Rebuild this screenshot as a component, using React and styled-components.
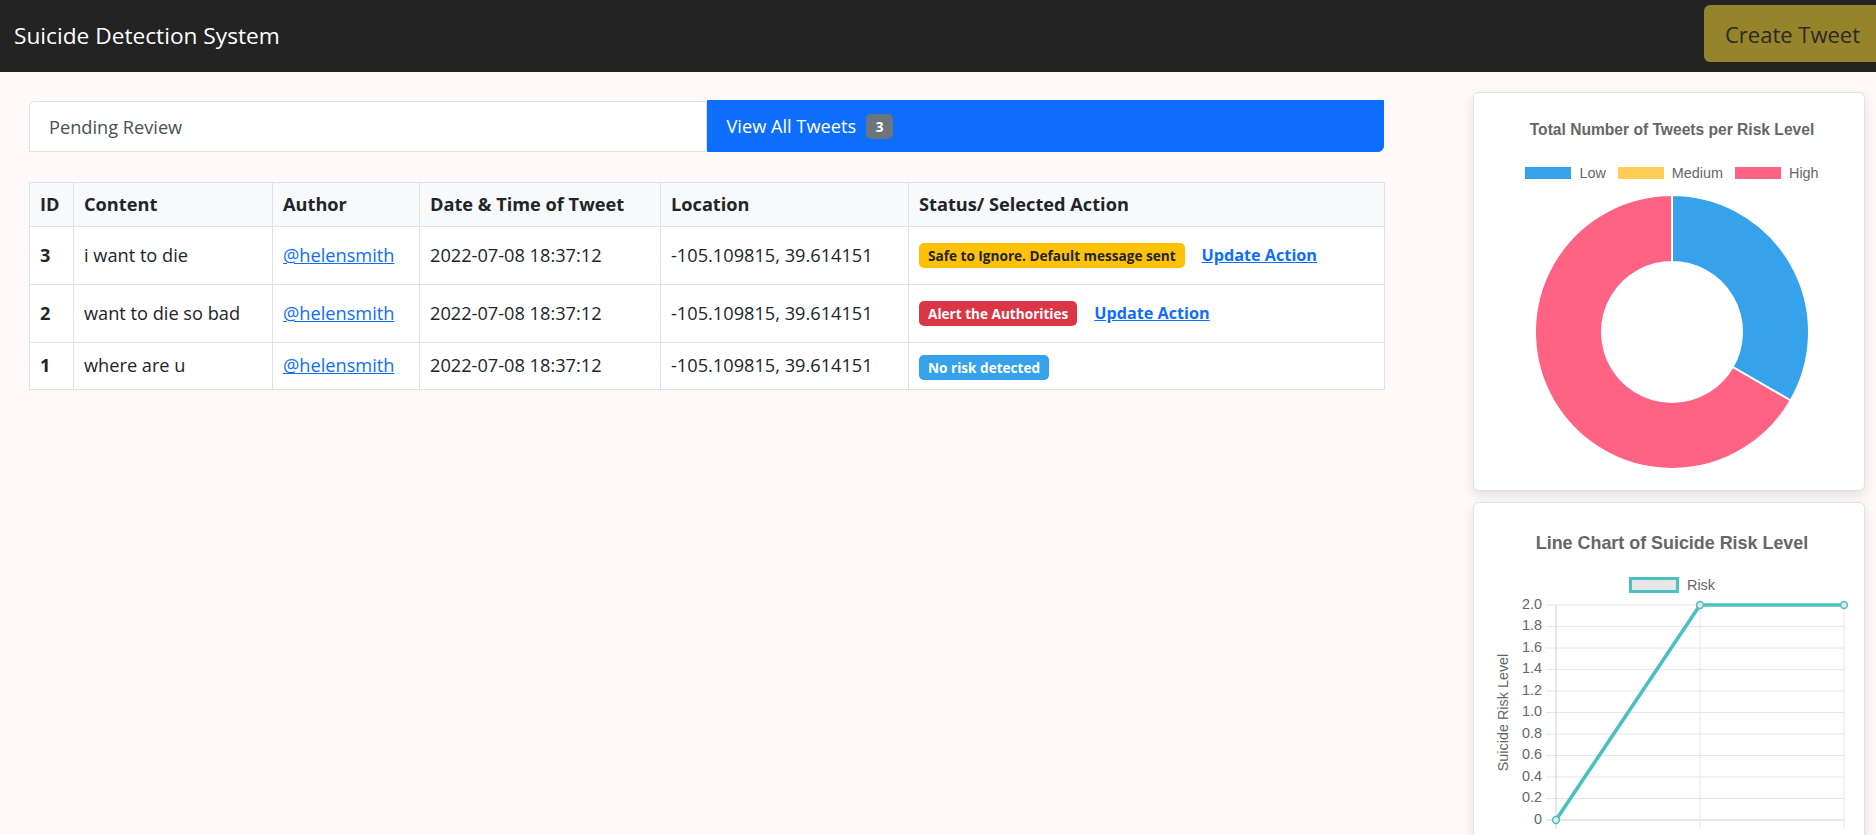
import React from "react";
import styled, { createGlobalStyle } from "styled-components";

const GlobalStyle = createGlobalStyle`
  html, body {
    margin: 0;
    padding: 0;
    overflow: hidden;
    background: #fff8f8;
    font-family: "Open Sans", "Noto Sans", sans-serif;
    color: #212529;
  }
`;

const tweets = [
  {
    id: 3,
    content: "i want to die",
    author: "@helensmith",
    date: "2022-07-08 18:37:12",
    location: "-105.109815, 39.614151",
    status: "Safe to Ignore. Default message sent",
    tone: "warning",
    canUpdate: true,
  },
  {
    id: 2,
    content: "want to die so bad",
    author: "@helensmith",
    date: "2022-07-08 18:37:12",
    location: "-105.109815, 39.614151",
    status: "Alert the Authorities",
    tone: "danger",
    canUpdate: true,
  },
  {
    id: 1,
    content: "where are u",
    author: "@helensmith",
    date: "2022-07-08 18:37:12",
    location: "-105.109815, 39.614151",
    status: "No risk detected",
    tone: "info",
    canUpdate: false,
  },
];

const badgeTones = {
  warning: { bg: "#ffc107", fg: "#212529" },
  danger: { bg: "#dc3545", fg: "#ffffff" },
  info: { bg: "#36a2eb", fg: "#ffffff" },
};

/* ---------- navbar ---------- */

const Navbar = styled.nav`
  height: 72px;
  background: #232323;
  display: flex;
  align-items: flex-start;
  overflow: hidden;
`;

const Brand = styled.div`
  color: #ffffff;
  font-size: 22.7px;
  line-height: 72px;
  padding-left: 14px;
`;

const CreateButton = styled.button`
  margin: 5px -20px 0 auto;
  flex-shrink: 0;
  width: 192px;
  height: 57px;
  padding: 0 0 0 21px;
  text-align: left;
  background: #958429;
  color: #2a2a2a;
  border: none;
  border-radius: 6px;
  font-family: inherit;
  font-size: 22px;
`;

/* ---------- layout ---------- */

const Main = styled.div`
  display: flex;
  align-items: flex-start;
`;

const LeftPane = styled.section`
  width: 1355px;
  margin-left: 29px;
  padding-top: 28px;
`;

const RightPane = styled.aside`
  width: 392px;
  margin: 0 11px 0 auto;
  padding-top: 20px;
  display: flex;
  flex-direction: column;
  gap: 11px;
`;

/* ---------- tabs ---------- */

const Tabs = styled.div`
  display: flex;
  align-items: flex-end;
`;

const Tab = styled.div`
  flex: 1;
  display: flex;
  align-items: center;
  box-sizing: border-box;
  height: ${(p) => (p.$active ? "52px" : "51px")};
  padding: 0 19px;
  font-size: 18.2px;
  background: ${(p) => (p.$active ? "#0d6efd" : "#ffffff")};
  color: ${(p) => (p.$active ? "#ffffff" : "#495057")};
  border: 1px solid ${(p) => (p.$active ? "#0d6efd" : "#dee2e6")};
  border-radius: ${(p) => (p.$active ? "0 0 6px 0" : "6px 0 0 0")};
`;

const CountBadge = styled.span`
  margin-left: 10px;
  display: inline-flex;
  align-items: center;
  justify-content: center;
  width: 27px;
  height: 25px;
  border-radius: 5px;
  background: #6c757d;
  color: #ffffff;
  font-size: 13.6px;
  font-weight: 700;
`;

/* ---------- table ---------- */

const Table = styled.table`
  margin-top: 30px;
  width: 100%;
  border-collapse: collapse;
  table-layout: fixed;
  background: #ffffff;
  font-size: 18.2px;
  line-height: 27px;
`;

const Col = styled.col`
  width: ${(p) => p.$w}px;
`;

const Th = styled.th`
  text-align: left;
  font-weight: 700;
  padding: 8px 10px;
  background: #f8f9fa;
  border: 1px solid #dee2e6;
  white-space: nowrap;
`;

const Td = styled.td`
  padding: 9px 10px;
  border: 1px solid #dee2e6;
  vertical-align: middle;
  font-weight: ${(p) => (p.$bold ? 700 : 400)};
  white-space: nowrap;
`;

const AuthorLink = styled.a`
  color: #0d6efd;
  text-decoration: underline;
`;

const StatusBadge = styled.span`
  display: inline-block;
  padding: 5px 9px;
  line-height: 15px;
  font-size: 13.6px;
  font-weight: 700;
  border-radius: 5px;
  background: ${(p) => badgeTones[p.$tone].bg};
  color: ${(p) => badgeTones[p.$tone].fg};
  vertical-align: middle;
`;

const ActionLink = styled.a`
  display: inline-block;
  margin-left: 17px;
  padding: 6px 0;
  color: #0d6efd;
  font-weight: 700;
  font-size: 16.2px;
  text-decoration: underline;
  vertical-align: middle;
`;

/* ---------- chart cards ---------- */

const Card = styled.div`
  box-sizing: border-box;
  height: ${(p) => p.$h}px;
  background: #ffffff;
  border: 1px solid #e2e2e2;
  border-radius: 6px;
  box-shadow: 0 4px 12px rgba(0, 0, 0, 0.1);
  padding: ${(p) => p.$pad};
  display: flex;
  flex-direction: column;
  align-items: center;
`;

const ChartTitle = styled.div`
  font-family: "Liberation Sans", Arial, sans-serif;
  font-weight: 700;
  color: #666666;
  font-size: ${(p) => p.$size}px;
  line-height: ${(p) => p.$lh}px;
`;

const Legend = styled.div`
  margin-top: ${(p) => p.$mt}px;
  display: flex;
  align-items: center;
  gap: 12px;
  height: 16px;
  font-family: "Liberation Sans", Arial, sans-serif;
  font-size: 14.4px;
  color: #666666;
`;

const LegendItem = styled.div`
  display: flex;
  align-items: center;
  gap: 8px;
`;

const LegendBox = styled.span`
  box-sizing: border-box;
  width: ${(p) => p.$w}px;
  height: ${(p) => p.$h}px;
  background: ${(p) => p.$fill};
  border: ${(p) => (p.$stroke ? `3.5px solid ${p.$stroke}` : "none")};
`;

const ChartSvg = styled.svg`
  display: block;
  margin-top: ${(p) => p.$mt}px;
  font-family: "Liberation Sans", Arial, sans-serif;
`;

function arcPath(cx, cy, r0, r1, a0, a1) {
  const pt = (r, a) => [
    cx + r * Math.sin((a * Math.PI) / 180),
    cy - r * Math.cos((a * Math.PI) / 180),
  ];
  const large = a1 - a0 > 180 ? 1 : 0;
  const [x0, y0] = pt(r1, a0);
  const [x1, y1] = pt(r1, a1);
  const [x2, y2] = pt(r0, a1);
  const [x3, y3] = pt(r0, a0);
  return `M${x0} ${y0} A${r1} ${r1} 0 ${large} 1 ${x1} ${y1} L${x2} ${y2} A${r0} ${r0} 0 ${large} 0 ${x3} ${y3} Z`;
}

const riskCounts = [
  { label: "Low", value: 1, color: "#36a2eb" },
  { label: "Medium", value: 0, color: "#ffcd56" },
  { label: "High", value: 2, color: "#ff6384" },
];

function DonutCard() {
  const total = riskCounts.reduce((s, r) => s + r.value, 0);
  let angle = 0;
  const slices = riskCounts
    .filter((r) => r.value > 0)
    .map((r) => {
      const a0 = angle;
      angle += (r.value / total) * 360;
      return { ...r, d: arcPath(138, 138, 70, 137, a0, angle) };
    });

  return (
    <Card $pad="27px 0 20px 6px" $h={399}>
      <ChartTitle $size={15.6} $lh={20}>
        Total Number of Tweets per Risk Level
      </ChartTitle>
      <Legend $mt={25}>
        {riskCounts.map((r) => (
          <LegendItem key={r.label}>
            <LegendBox $w={46} $h={12} $fill={r.color} />
            {r.label}
          </LegendItem>
        ))}
      </Legend>
      <ChartSvg $mt={13} width="276" height="276" viewBox="0 0 276 276">
        {slices.map((s) => (
          <path key={s.label} d={s.d} fill={s.color} stroke="#ffffff" strokeWidth="2" />
        ))}
      </ChartSvg>
    </Card>
  );
}

const riskSeries = [0, 2, 2];

function LineCard() {
  const top = 10;
  const bottom = 225;
  const left = 76;
  const right = 364;
  const ticks = [];
  for (let i = 0; i <= 10; i++) ticks.push(i * 0.2);
  const yOf = (v) => bottom - (v / 2) * (bottom - top);
  const xs = riskSeries.map(
    (_, i) => left + (i * (right - left)) / (riskSeries.length - 1)
  );
  const pts = riskSeries.map((v, i) => `${xs[i]},${yOf(v)}`).join(" ");

  return (
    <Card $pad="28px 0 0 6px" $h={400}>
      <ChartTitle $size={17.9} $lh={24}>
        Line Chart of Suicide Risk Level
      </ChartTitle>
      <Legend $mt={22}>
        <LegendItem>
          <LegendBox $w={50} $h={16} $fill="#e6e6e6" $stroke="#4bc0c0" />
          Risk
        </LegendItem>
      </Legend>
      <ChartSvg $mt={2} width="384" height="260" viewBox="0 0 384 260">
        {ticks.map((v, i) => (
          <g key={i}>
            <line
              x1={66}
              x2={right}
              y1={yOf(v)}
              y2={yOf(v)}
              stroke={i === 0 ? "#cfcfcf" : "#e6e6e6"}
              strokeWidth="1"
            />
            <text
              x={62}
              y={yOf(v)}
              textAnchor="end"
              dominantBaseline="middle"
              fontSize="14.4"
              fill="#666666"
            >
              {i === 0 ? "0" : v.toFixed(1)}
            </text>
          </g>
        ))}
        {xs.map((x, i) => (
          <line
            key={i}
            x1={x}
            x2={x}
            y1={top}
            y2={bottom + 9}
            stroke={i === 0 ? "#cfcfcf" : "#e6e6e6"}
            strokeWidth="1"
          />
        ))}
        <text
          transform={`translate(24 ${(top + bottom) / 2}) rotate(-90)`}
          textAnchor="middle"
          dominantBaseline="middle"
          fontSize="14.4"
          fill="#666666"
        >
          Suicide Risk Level
        </text>
        <polyline
          points={pts}
          fill="none"
          stroke="#4bc0c0"
          strokeWidth="3.6"
          strokeLinejoin="miter"
        />
        {riskSeries.map((v, i) => (
          <circle
            key={i}
            cx={xs[i]}
            cy={yOf(v)}
            r="3.4"
            fill="#e6e6e6"
            stroke="#4bc0c0"
            strokeWidth="1.5"
          />
        ))}
      </ChartSvg>
    </Card>
  );
}

/* ---------- page ---------- */

export default function App() {
  return (
    <>
      <GlobalStyle />
      <Navbar>
        <Brand>Suicide Detection System</Brand>
        <CreateButton>Create Tweet</CreateButton>
      </Navbar>
      <Main>
        <LeftPane>
          <Tabs>
            <Tab>Pending Review</Tab>
            <Tab $active>
              View All Tweets
              <CountBadge>3</CountBadge>
            </Tab>
          </Tabs>
          <Table>
            <colgroup>
              {[44, 199, 147, 241, 248, 476].map((w, i) => (
                <Col key={i} $w={w} />
              ))}
            </colgroup>
            <thead>
              <tr>
                <Th>ID</Th>
                <Th>Content</Th>
                <Th>Author</Th>
                <Th>Date &amp; Time of Tweet</Th>
                <Th>Location</Th>
                <Th>Status/ Selected Action</Th>
              </tr>
            </thead>
            <tbody>
              {tweets.map((t) => (
                <tr key={t.id}>
                  <Td $bold>{t.id}</Td>
                  <Td>{t.content}</Td>
                  <Td>
                    <AuthorLink href="#">{t.author}</AuthorLink>
                  </Td>
                  <Td>{t.date}</Td>
                  <Td>{t.location}</Td>
                  <Td>
                    <StatusBadge $tone={t.tone}>{t.status}</StatusBadge>
                    {t.canUpdate && <ActionLink href="#">Update Action</ActionLink>}
                  </Td>
                </tr>
              ))}
            </tbody>
          </Table>
        </LeftPane>
        <RightPane>
          <DonutCard />
          <LineCard />
        </RightPane>
      </Main>
    </>
  );
}
